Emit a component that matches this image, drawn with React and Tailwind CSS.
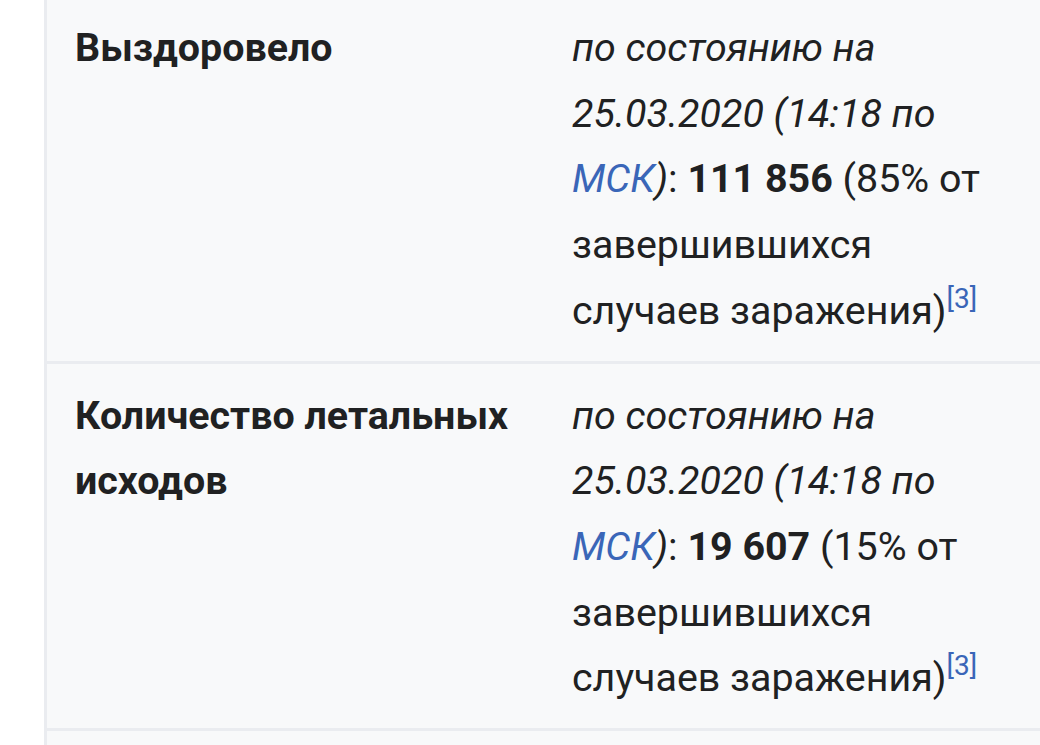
export default function App() {
  const Row = ({ label, num, pct, top }) => (
    <div className={`flex border-b-[3px] border-[#eaecf0] ${top ? "pt-[15px]" : "pt-[19px]"} pb-[17px]`}>
      <div className="w-[525px] shrink-0 pl-[28px] pr-[20px] font-bold text-[#202122]">{label}</div>
      <div className="w-[440px] text-[#202122]">
        <i>по состоянию на 25.03.2020 (14:18 по </i>
        <i className="text-[#3a66b8]">МСК</i>
        <i>)</i>: <b>{num}</b> ({pct} от завершившихся случаев заражения)
        <sup className="text-[#3a66b8] text-[28px] leading-none relative -top-[16px] align-baseline">[3]</sup>
      </div>
    </div>
  );
  return (
    <div
      className="w-[1040px] h-[745px] overflow-hidden bg-white flex"
      style={{ fontFamily: "Roboto, 'Noto Sans', sans-serif" }}
    >
      <div className="w-[44px] shrink-0 bg-white" />
      <div className="flex-1 bg-[#f8f9fa] border-l-[3px] border-[#eaecf0] text-[39.4px] leading-[65.7px]">
        <Row top label="Выздоровело" num="111 856" pct="85%" />
        <Row label="Количество летальных исходов" num="19 607" pct="15%" />
        <div className="h-[40px]" />
      </div>
    </div>
  );
}
